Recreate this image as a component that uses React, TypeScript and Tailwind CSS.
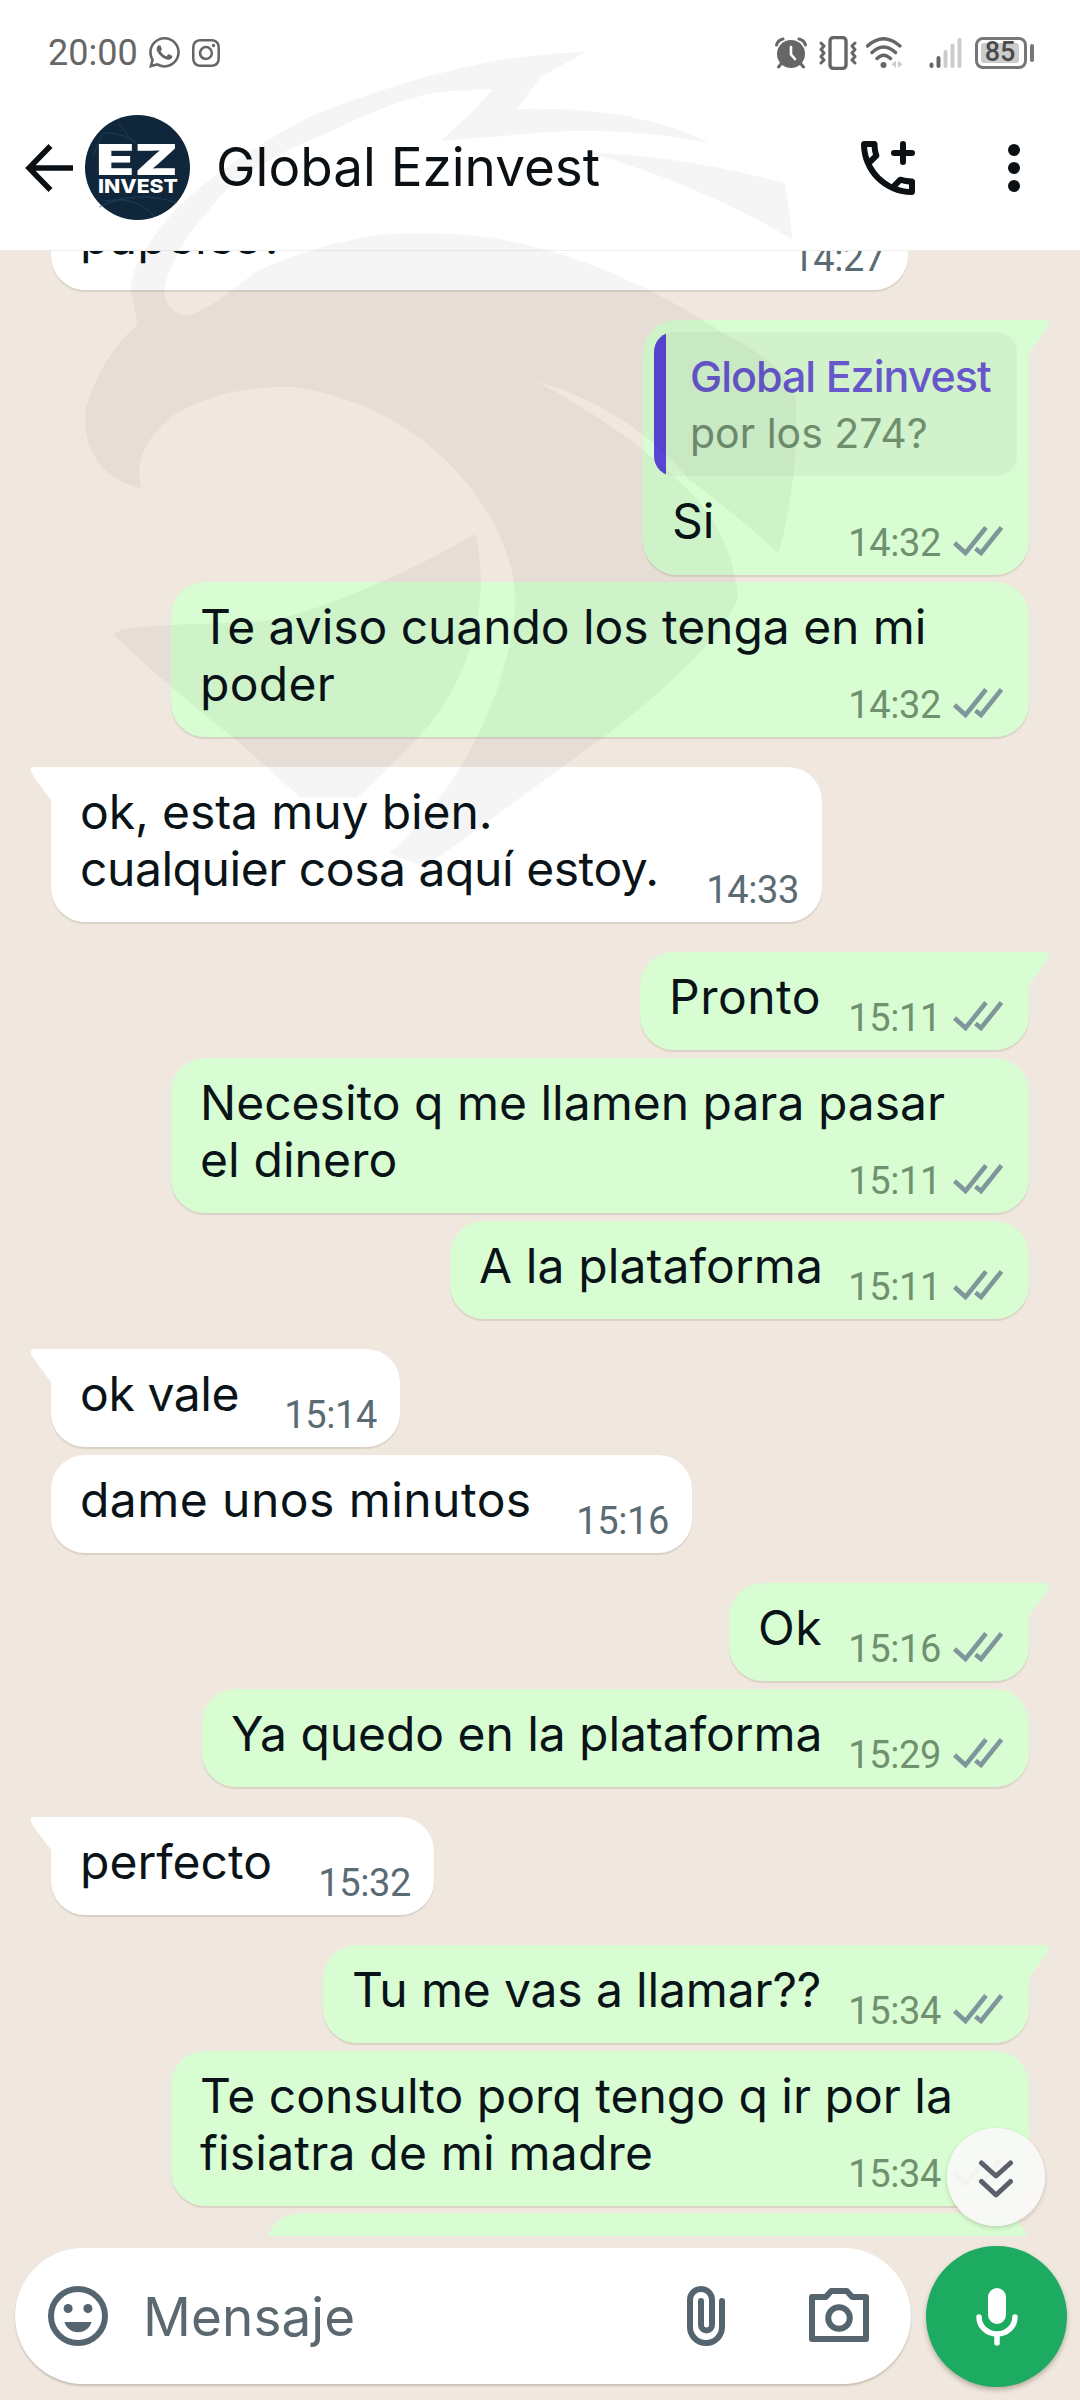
import React from 'react';
import { BsInstagram, BsWhatsapp } from 'react-icons/bs';

interface Message {
  id: number;
  out?: boolean;
  tail?: boolean;
  lines: string[];
  tracking?: string[];
  time: string;
  box: string;
  quote?: { author: string; text: string };
}

const messages: Message[] = [
  { id: 1, lines: ['', 'papeles?'], tracking: ['', 'tracking-[0.2px]'], time: '14:27', box: 'w-[857px] h-[155px] -mt-[116px]' },
  {
    id: 2,
    out: true,
    tail: true,
    lines: ['Si'],
    time: '14:32',
    box: 'w-[386px] h-[255px] mt-[30px]',
    quote: { author: 'Global Ezinvest', text: 'por los 274?' }
  },
  {
    id: 3,
    out: true,
    lines: ['Te aviso cuando los tenga en mi', 'poder'],
    tracking: ['tracking-[-0.06px]', 'tracking-[0.3px]'],
    time: '14:32',
    box: 'w-[858px] h-[155px] mt-[7px]'
  },
  {
    id: 4,
    tail: true,
    lines: ['ok, esta muy bien.', 'cualquier cosa aquí estoy.'],
    tracking: ['tracking-[-0.1px]', 'tracking-[-0.45px]'],
    time: '14:33',
    box: 'w-[771px] h-[155px] mt-[30px]'
  },
  { id: 5, out: true, tail: true, lines: ['Pronto'], tracking: ['tracking-[0.5px]'], time: '15:11', box: 'w-[389px] h-[98px] mt-[30px]' },
  { id: 6, out: true, lines: ['Necesito q me llamen para pasar', 'el dinero'], tracking: ['', 'tracking-[0.1px]'], time: '15:11', box: 'w-[858px] h-[155px] mt-2' },
  { id: 7, out: true, lines: ['A la plataforma'], tracking: ['tracking-[0.1px]'], time: '15:11', box: 'w-[579px] h-[98px] mt-2' },
  { id: 8, tail: true, lines: ['ok vale'], tracking: ['tracking-[-0.4px]'], time: '15:14', box: 'w-[349px] h-[98px] mt-[30px]' },
  { id: 9, lines: ['dame unos minutos'], tracking: ['tracking-[0.45px]'], time: '15:16', box: 'w-[641px] h-[98px] mt-2' },
  { id: 10, out: true, tail: true, lines: ['Ok'], tracking: ['tracking-[0.6px]'], time: '15:16', box: 'w-[300px] h-[98px] mt-[30px]' },
  { id: 11, out: true, lines: ['Ya quedo en la plataforma'], tracking: ['tracking-[-0.06px]'], time: '15:29', box: 'w-[827px] h-[98px] mt-2' },
  { id: 12, tail: true, lines: ['perfecto'], time: '15:32', box: 'w-[383px] h-[98px] mt-[30px]' },
  { id: 13, out: true, tail: true, lines: ['Tu me vas a llamar??'], tracking: ['tracking-[-0.15px]'], time: '15:34', box: 'w-[706px] h-[98px] mt-[30px]' },
  {
    id: 14,
    out: true,
    lines: ['Te consulto porq tengo q ir por la', 'fisiatra de mi madre'],
    tracking: ['', 'tracking-[0.2px]'],
    time: '15:34',
    box: 'w-[858px] h-[155px] mt-2'
  },
  { id: 15, out: true, lines: [''], time: '', box: 'w-[763px] h-[98px] mt-[7px]' }
];

const Checks = () => (
  <svg className="ml-[12px] mb-[9px] w-[50px] h-[30px]" viewBox="0 0 50 30" fill="none" stroke="#80969b" strokeWidth="4.600">
    <path d="M1.500 17 L12.500 27 L33 1.500" />
    <path d="M22.500 22.500 L28 27 L48.500 1.500" />
  </svg>
);

const Tail = ({ out }: { out?: boolean }) =>
  out ? (
    <svg className="absolute top-0 -right-[21px] w-[22px] h-[34px]" viewBox="0 0 22 34" fill="#d8fdd2">
      <path d="M0 0 H18 Q23 1 20.500 6 Q19 9 1 33 H0 Z" />
    </svg>
  ) : (
    <svg className="absolute top-0 -left-[21px] w-[22px] h-[34px]" viewBox="0 0 22 34" fill="#fff">
      <path d="M22 0 H4 Q-1 1 1.500 6 Q3 9 21 33 H22 Z" />
    </svg>
  );

const Bubble = ({ message }: { message: Message }) => {
  const { out, tail, lines, tracking, time, box, quote } = message;
  const tone = out ? 'self-end bg-[#d8fdd2]' : 'self-start bg-white';
  const corner = tail ? (out ? 'rounded-tr-none' : 'rounded-tl-none') : '';

  return (
    <div className={`relative shrink-0 flex flex-col rounded-[34px] shadow-[0_2px_1px_rgba(90,70,50,0.14)] ${tone} ${corner} ${box}`}>
      {tail && <Tail out={out} />}
      {quote && (
        <div className="ml-[11px] mr-3 mt-3 h-36 shrink-0 flex rounded-[20px] overflow-hidden bg-[#d2f2cc]">
          <div className="w-3 bg-[#5b45d6]" />
          <div className="pl-[24px] pt-4 whitespace-nowrap">
            <p className="text-[43px] leading-[57px] font-medium tracking-[-1px] text-[#6757cb]">{quote.author}</p>
            <p className="text-[41px] leading-[57px] text-[#6f8f6f]">{quote.text}</p>
          </div>
        </div>
      )}
      <div className="grid flex-1">
        <div className="col-start-1 row-start-1 pl-[29px] pt-4 text-[48px] leading-[57px] whitespace-nowrap text-[#0a1418]">
          {lines.map((line, i) => (
            <p key={i} className={`min-h-[57px] ${tracking ? tracking[i] : ''}`}>
              {line}
            </p>
          ))}
        </div>
        <div className={`col-start-1 row-start-1 self-end justify-self-end flex items-end pb-[10px] ${out ? 'pr-[26px] text-[#6f9170]' : 'pr-[23px] text-[#5b6b73]'}`}>
          <span className="font-[Roboto,sans-serif] text-[38px] leading-[44px] tracking-[-0.4px]">{time}</span>
          {out && time && <Checks />}
        </div>
      </div>
    </div>
  );
};

const StatusBar = () => (
  <div className="h-[105px] flex items-center justify-between pl-12 pr-[46px] text-[#666]">
    <div className="flex items-center">
      <span className="w-[101px] font-[Roboto,sans-serif] text-[36px] leading-none">20:00</span>
      <BsWhatsapp className="w-[31px] h-[31px] mr-3" />
      <BsInstagram className="w-[28px] h-[28px]" />
    </div>
    <div className="flex items-center">
      <svg className="w-8 h-8 mr-3" viewBox="0 0 32 32" fill="none" stroke="currentColor" strokeLinecap="round">
        <circle cx="16" cy="17" r="14" fill="currentColor" stroke="none" />
        <path d="M1.500 8 Q3 3 8 2 M30.500 8 Q29 3 24 2" strokeWidth="3" />
        <path d="M6 27 L3.500 30 M26 27 L28.500 30" strokeWidth="3" />
        <path d="M16 10 V17.500 L20 22" stroke="#fff" strokeWidth="2.600" />
      </svg>
      <svg className="w-[38px] h-[34px] mr-[9px]" viewBox="0 0 38 34" fill="none" stroke="currentColor" strokeLinecap="round" strokeLinejoin="round">
        <rect x="11" y="1.500" width="16" height="31" rx="3.500" strokeWidth="3.400" />
        <path d="M2 7 L5 10 L2 13.500 L5 17 L2 20.500 L5 24 L2 27" strokeWidth="3" />
        <path d="M36 7 L33 10 L36 13.500 L33 17 L36 20.500 L33 24 L36 27" strokeWidth="3" />
      </svg>
      <svg className="w-[38px] h-8 mr-[25px]" viewBox="0 0 38 32" fill="none" stroke="currentColor" strokeLinecap="round">
        <path d="M1.500 9 Q17.500 -5.500 34 9 M6 15.500 Q17.500 4.500 29.500 15.500 M11 21.500 Q17.500 15 24.500 21.500" strokeWidth="3.400" />
        <circle cx="17.500" cy="28" r="3" fill="currentColor" stroke="none" />
        <path d="M30 23.500 V31 L25.500 27.300 Z M32 23.500 V31 L36.500 27.300 Z" fill="#ccc" stroke="none" />
      </svg>
      <svg className="w-[34px] h-8 mr-3" viewBox="0 0 34 32" fill="none" strokeLinecap="round" strokeWidth="4">
        <path d="M2.500 29 V27.500 M9.500 29 V21" stroke="#666" />
        <path d="M16.500 29 V15 M23.500 29 V8.500 M30.500 29 V3" stroke="#ccc" />
      </svg>
      <div className="w-[52px] h-8 rounded-[8px] border-[3px] border-[#777] p-[3px]">
        <div className="h-full w-[38px] rounded-[3px] bg-[#ccc] flex items-center justify-center">
          <span className="font-[Roboto,sans-serif] text-[27px] leading-none font-medium text-[#4a4a4a]">85</span>
        </div>
      </div>
      <div className="w-1 h-[18px] ml-[3px] rounded-full bg-[#777]" />
    </div>
  </div>
);

const Avatar = () => (
  <svg className="w-[105px] h-[105px]" viewBox="0 0 105 105">
    <circle cx="52.500" cy="52.500" r="52.500" fill="#10263a" />
    <g fill="none" stroke="#24506a" strokeOpacity="0.6">
      <path d="M18 18 Q40 16 58 34 M34 10 L50 28 M8 40 Q14 28 18 18" />
      <path d="M14 92 Q52 74 92 88 M20 86 Q50 80 70 102" />
    </g>
    <g fill="#fff" fontFamily="Inter, sans-serif">
      <text x="11" y="60" fontSize="42" fontWeight="900" textLength="82" lengthAdjust="spacingAndGlyphs">
        EZ
      </text>
      <text x="13" y="78" fontSize="19" fontWeight="800" textLength="80" lengthAdjust="spacingAndGlyphs">
        INVEST
      </text>
    </g>
  </svg>
);

const ChatHeader = () => (
  <div className="h-[145px] pb-[20px] flex items-center pl-6">
    <svg className="w-[49px] h-[48px]" viewBox="0 0 49 48" fill="none" stroke="#0a1014" strokeWidth="5.500">
      <path d="M49 24 H5 M26.500 2 L5 24 L26.500 46" />
    </svg>
    <div className="ml-3">
      <Avatar />
    </div>
    <h1 className="ml-[26px] flex-1 text-[53px] leading-none whitespace-nowrap text-[#0a1014]">Global Ezinvest</h1>
    <svg className="w-[72px] h-[72px] mr-[84px]" viewBox="0 0 24 24" fill="#0a1014">
      <path d="M6.540 5c.06.89.21 1.760.45 2.590l-1.200 1.200c-.41-1.200-.67-2.470-.76-3.790h1.510m9.860 12.020c.85.24 1.720.39 2.600.45v1.490c-1.320-.09-2.590-.35-3.800-.75l1.200-1.190M7.500 3H4c-.55 0-1 .45-1 1 0 9.390 7.610 17 17 17 .55 0 1-.45 1-1v-3.490c0-.55-.45-1-1-1-1.240 0-2.450-.2-3.570-.57-.1-.04-.21-.05-.31-.05-.26 0-.51.1-.71.29l-2.200 2.200c-2.830-1.450-5.150-3.760-6.590-6.590l2.200-2.200c.28-.28.36-.67.25-1.020C8.700 6.450 8.500 5.250 8.500 4c0-.55-.45-1-1-1z" />
      <path d="M17 4V10M14 7H20" stroke="#0a1014" strokeWidth="2" strokeLinecap="round" />
    </svg>
    <svg className="w-3 h-12 mr-[60px]" viewBox="0 0 12 48" fill="#0a1014">
      <circle cx="6" cy="6" r="6" />
      <circle cx="6" cy="24" r="6" />
      <circle cx="6" cy="42" r="6" />
    </svg>
  </div>
);

const Composer = () => (
  <div className="h-[164px] shrink-0 flex items-start pl-[15px] pt-3">
    <div className="w-[896px] h-[136px] flex items-center rounded-full bg-white pl-[27px] pr-9 shadow-[0_2px_2px_rgba(90,70,50,0.25)]">
      <svg className="w-[72px] h-[72px]" viewBox="0 0 24 24" fill="#54656f">
        <circle cx="12" cy="12" r="9" fill="none" stroke="#54656f" strokeWidth="2" />
        <circle cx="8.700" cy="9.500" r="1.500" />
        <circle cx="15.300" cy="9.500" r="1.500" />
        <path d="M7.500 14H16.500C16 16 14.300 17.400 12 17.400S8 16 7.500 14Z" />
      </svg>
      <span className="ml-[29px] flex-1 pt-[2px] text-[53px] leading-none tracking-[0.1px] text-[#5b686f]">Mensaje</span>
      <svg className="w-[38px] h-[60px] mr-[78px]" viewBox="0 0 38 60" fill="none" stroke="#54656f" strokeWidth="6" strokeLinecap="round">
        <path d="M35 15 V41 A16 16 0 0 1 3 41 V14 A11 11 0 0 1 25 14 V39 A5.500 5.500 0 0 1 14 39 V15" />
      </svg>
      <svg className="w-[72px] h-[72px] mt-[3px]" viewBox="0 0 24 24" fill="none" stroke="#54656f" strokeWidth="2" strokeLinejoin="round">
        <path d="M3 5H7.600L9.400 3H14.600L16.400 5H21V19H3Z" />
        <circle cx="12" cy="12" r="3.600" />
      </svg>
    </div>
    <div className="ml-[15px] -mt-[2px] w-[141px] h-[141px] flex items-center justify-center rounded-full bg-[#1dab61] shadow-[0_3px_5px_rgba(60,40,20,0.3)]">
      <svg className="w-[42px] h-[58px]" viewBox="0 0 42 58" fill="none" stroke="#fff">
        <rect x="12" y="0" width="18" height="36" rx="9" fill="#fff" stroke="none" />
        <path d="M3 29 A18 17 0 0 0 39 29 M21 46 V55" strokeWidth="5.500" strokeLinecap="round" />
      </svg>
    </div>
  </div>
);

// faint eagle head laid over the top of the screen
const Watermark = () => (
  <svg className="absolute left-0 top-0 w-[1080px] h-[900px] pointer-events-none" viewBox="0 0 1568 1568" preserveAspectRatio="none" fill="#000" fillOpacity="0.04">
    <path d="M850 90 C700 95 560 150 450 203 C360 260 290 320 250 372 C210 430 190 470 190 505 L200 565 C165 600 140 650 125 710 C118 770 140 835 205 850 C195 800 215 760 250 725 C310 680 380 672 430 675 C520 690 600 745 650 805 C710 880 745 960 748 1040 C748 1120 720 1220 690 1290 C670 1340 620 1430 565 1487 L617 1510 C700 1440 800 1350 870 1290 C960 1210 1050 1110 1072 1040 C1066 970 1040 900 1000 855 C930 770 850 710 780 665 C870 695 950 760 1000 835 C1050 880 1100 930 1130 965 C1150 880 1160 780 1155 690 C1145 650 1100 610 1050 580 C960 510 860 450 740 420 C680 405 620 405 560 408 C480 420 410 450 370 475 C330 510 300 545 265 550 C245 540 235 520 240 495 C250 453 270 410 300 372 C330 315 400 267 475 232 C540 195 590 170 640 160 L715 155 L690 190 L640 245 L725 238 C840 220 940 228 1031 249 C960 205 860 185 750 190 L785 135 Z" />
    <path d="M849 265 C950 270 1050 290 1140 319 L1151 418 C1080 365 960 300 849 265 Z" />
    <path d="M165 1105 C180 1085 300 1090 400 1080 C500 1050 620 980 690 930 C705 1000 700 1090 670 1170 C645 1240 610 1290 518 1390 L436 1390 L344 1290 C290 1240 210 1160 165 1105 Z" />
  </svg>
);

const App = () => {
  return (
    <div className="relative w-[1080px] h-[2400px] flex flex-col overflow-hidden bg-[#f0e8df] font-[Inter,sans-serif]">
      <header className="shrink-0 h-[251px] bg-white border-b border-[#f0eeec]">
        <StatusBar />
        <ChatHeader />
      </header>

      <main className="h-[1985px] shrink-0 flex flex-col overflow-hidden pl-[51px] pr-[51px]">
        {messages.map((message) => (
          <Bubble key={message.id} message={message} />
        ))}
      </main>

      <Composer />

      <button className="absolute left-[947px] top-[2128px] w-[98px] h-[98px] flex items-center justify-center rounded-full bg-[#f9f9f7]/95 shadow-[0_2px_4px_rgba(60,40,20,0.2)]">
        <svg className="w-[36px] h-[40px] mt-1" viewBox="0 0 36 40" fill="none" stroke="#5c606b" strokeWidth="5" strokeLinecap="round" strokeLinejoin="round">
          <path d="M3.500 4 L18 17 L32.500 4 M3.500 22.500 L18 36 L32.500 22.500" />
        </svg>
      </button>

      <Watermark />
    </div>
  );
};

export default App;
